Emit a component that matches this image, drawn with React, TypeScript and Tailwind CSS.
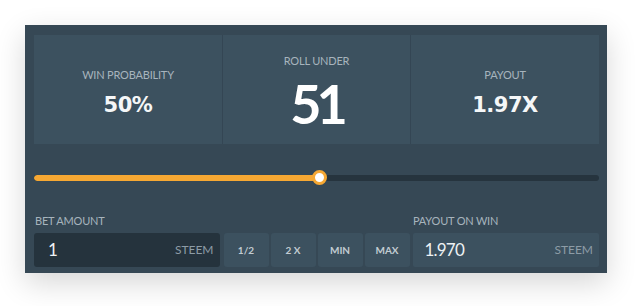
import React from "react";

const stats = [
  { label: "WIN PROBABILITY", value: "50%", big: false },
  { label: "ROLL UNDER", value: "51", big: true },
  { label: "PAYOUT", value: "1.97X", big: false },
];

const buttons = ["1/2", "2 X", "MIN", "MAX"];

export default function App() {
  const percent = 50;

  return (
    <div className="min-h-screen bg-white p-[25px] font-['Lato',sans-serif]">
      <div className="w-[582px] bg-[#364855] pl-[9px] pr-[8px] pt-[10px] pb-[6px] shadow-[0_10px_28px_rgba(0,0,0,0.16)]">
        {/* Stats */}
        <div className="grid h-[109px] grid-cols-[188px_187px_188px] gap-px bg-[#344654]">
          {stats.map((s) => (
            <div
              key={s.label}
              className="flex flex-col items-center justify-center bg-[#3c515f] pt-[6px]"
            >
              <div className="text-[11px] leading-[13px] tracking-[-0.2px] text-[#a7b4bd]">
                {s.label}
              </div>
              {s.big ? (
                <div className="mt-[9px] text-[54px] font-bold leading-[56px] tracking-[-5px] text-white">
                  {s.value}
                </div>
              ) : (
                <div className="mt-[12px] font-['DejaVu_Sans',sans-serif] text-[21px] font-bold leading-[24px] tracking-[-0.5px] text-[#f5f7f8]">
                  {s.value}
                </div>
              )}
            </div>
          ))}
        </div>

        {/* Slider */}
        <div className="relative mt-[26px] flex h-[15px] items-center">
          <div className="h-[6px] w-full overflow-hidden rounded-full bg-[#26343e]">
            <div
              className="h-full rounded-full bg-[#f6a833]"
              style={{ width: `${percent}%` }}
            />
          </div>
          <div className="absolute left-[278px] top-0 h-[15px] w-[15px] rounded-full border-[3px] border-[#f6a833] bg-white" />
        </div>

        {/* Labels */}
        <div className="mt-[29px] flex text-[11px] leading-[13px] tracking-[-0.2px] text-[#a7b4bd]">
          <div className="w-[378px] pl-px">BET AMOUNT</div>
          <div className="pl-[1px]">PAYOUT ON WIN</div>
        </div>

        {/* Inputs */}
        <div className="mt-[6px] flex h-[34px]">
          <div className="flex w-[186px] items-center justify-between rounded-[3px] bg-[#25333d] pl-[14px] pr-[6px]">
            <span className="text-[17px] text-[#eef1f3]">1</span>
            <span className="text-[12px] text-[#8d9ca6]">STEEM</span>
          </div>
          <div className="ml-[4px] flex gap-[2px]">
            {buttons.map((b) => (
              <button
                key={b}
                className="flex w-[45px] items-center justify-center rounded-[3px] bg-[#3c515f] text-[10px] font-bold text-[#c2ccd2]"
              >
                {b}
              </button>
            ))}
          </div>
          <div className="ml-[3px] flex w-[187px] items-center justify-between rounded-[2px] bg-[#3c515f] pl-[12px] pr-[6px]">
            <span className="text-[17px] tracking-[-0.8px] text-[#eef1f3]">1.970</span>
            <span className="text-[12px] text-[#8d9ca6]">STEEM</span>
          </div>
        </div>
      </div>
    </div>
  );
}
